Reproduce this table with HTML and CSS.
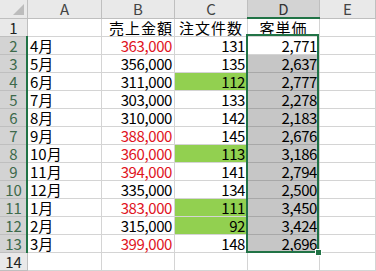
FILE: index.html
```html
<!DOCTYPE html>
<html lang="ja">
<head>
<meta charset="utf-8">
<link rel="stylesheet" href="styles.css">
</head>
<body>
<div class="sheet">
  <div class="grid">
    <div class="hd corner"><span class="tri"></span></div>
    <div class="hd col">A</div>
    <div class="hd col">B</div>
    <div class="hd col">C</div>
    <div class="hd col cur">D</div>
    <div class="hd col">E</div>

    <div class="hd row">1</div>
    <div class="c"></div><div class="c r jp">売上金額</div><div class="c m jp">注文件数</div><div class="c m jp">客単価</div><div class="c"></div>

    <div class="hd row cur">2</div>
    <div class="c">4月</div><div class="c r red">363,000</div><div class="c r">131</div><div class="c r">2,771</div><div class="c"></div>

    <div class="hd row cur">3</div>
    <div class="c">5月</div><div class="c r">356,000</div><div class="c r">135</div><div class="c r sel">2,637</div><div class="c"></div>

    <div class="hd row cur">4</div>
    <div class="c">6月</div><div class="c r">311,000</div><div class="c r g">112</div><div class="c r sel">2,777</div><div class="c"></div>

    <div class="hd row cur">5</div>
    <div class="c">7月</div><div class="c r">303,000</div><div class="c r">133</div><div class="c r sel">2,278</div><div class="c"></div>

    <div class="hd row cur">6</div>
    <div class="c">8月</div><div class="c r">310,000</div><div class="c r">142</div><div class="c r sel">2,183</div><div class="c"></div>

    <div class="hd row cur">7</div>
    <div class="c">9月</div><div class="c r red">388,000</div><div class="c r">145</div><div class="c r sel">2,676</div><div class="c"></div>

    <div class="hd row cur">8</div>
    <div class="c">10月</div><div class="c r red">360,000</div><div class="c r g">113</div><div class="c r sel">3,186</div><div class="c"></div>

    <div class="hd row cur">9</div>
    <div class="c">11月</div><div class="c r red">394,000</div><div class="c r">141</div><div class="c r sel">2,794</div><div class="c"></div>

    <div class="hd row cur">10</div>
    <div class="c">12月</div><div class="c r">335,000</div><div class="c r">134</div><div class="c r sel">2,500</div><div class="c"></div>

    <div class="hd row cur">11</div>
    <div class="c">1月</div><div class="c r red">383,000</div><div class="c r g">111</div><div class="c r sel">3,450</div><div class="c"></div>

    <div class="hd row cur">12</div>
    <div class="c">2月</div><div class="c r">315,000</div><div class="c r g">92</div><div class="c r sel">3,424</div><div class="c"></div>

    <div class="hd row cur">13</div>
    <div class="c">3月</div><div class="c r red">399,000</div><div class="c r">148</div><div class="c r sel">2,696</div><div class="c"></div>

    <div class="hd row">14</div>
    <div class="c"></div><div class="c"></div><div class="c"></div><div class="c"></div><div class="c"></div>
  </div>
  <div class="rowmark"></div>
  <div class="colmark"></div>
  <div class="selbox"><span class="handle"></span></div>
</div>
</body>
</html>
```

FILE: styles.css
```css
html, body {
  margin: 0;
  padding: 0;
  background: #ffffff;
  overflow: hidden;
}

.sheet {
  position: relative;
  width: 376px;
  height: 271px;
  overflow: hidden;
  font-family: "Noto Sans CJK JP", "Noto Sans", sans-serif;
  font-size: 15px;
  color: #000;
}

.grid {
  display: grid;
  grid-template-columns: 28px 74px 73px 73px 72px 1fr;
  grid-template-rows: 19px repeat(14, 18px);
}

.c, .hd {
  box-sizing: border-box;
  border-right: 1px solid #d4d4d4;
  border-bottom: 1px solid #d4d4d4;
  display: flex;
  align-items: flex-end;
  line-height: 17px;
  white-space: nowrap;
}

.c {
  padding: 0 2px 0 2px;
}

.c.r { justify-content: flex-end; letter-spacing: -0.4px; }
.c.m { justify-content: center; }
.c.jp { letter-spacing: 1px; }
.c.r.jp { padding-right: 1px; }
.c.red { color: #e0141e; }
.c.g { background: #92d050; }
.c.sel {
  background: #c6c6c6;
  border-bottom-color: #a8a8a8;
}

.hd {
  background: #e9e9e9;
  color: #444;
  justify-content: center;
  border-right-color: #bfbfbf;
  border-bottom-color: #bfbfbf;
}

.hd.col { line-height: 18px; }
.hd.row { color: #222; }
.hd.cur {
  background: #d3d3d3;
  color: #3d6a4b;
}
.hd.col.cur { color: #333; }

.corner { position: relative; }
.tri {
  position: absolute;
  right: 3px;
  bottom: 3px;
  width: 0;
  height: 0;
  border-left: 11px solid transparent;
  border-bottom: 11px solid #bcbcbc;
}

.rowmark {
  position: absolute;
  left: 26px;
  top: 36px;
  width: 2px;
  height: 217px;
  background: #217346;
}

.colmark {
  position: absolute;
  left: 247px;
  top: 17px;
  width: 73px;
  height: 2px;
  background: #217346;
}

.selbox {
  position: absolute;
  left: 246px;
  top: 34px;
  width: 73px;
  height: 219px;
  box-sizing: border-box;
  border: 2px solid #217346;
}

.handle {
  position: absolute;
  right: -5px;
  bottom: -5px;
  width: 5px;
  height: 5px;
  background: #217346;
  border: 1px solid #fff;
}
```
